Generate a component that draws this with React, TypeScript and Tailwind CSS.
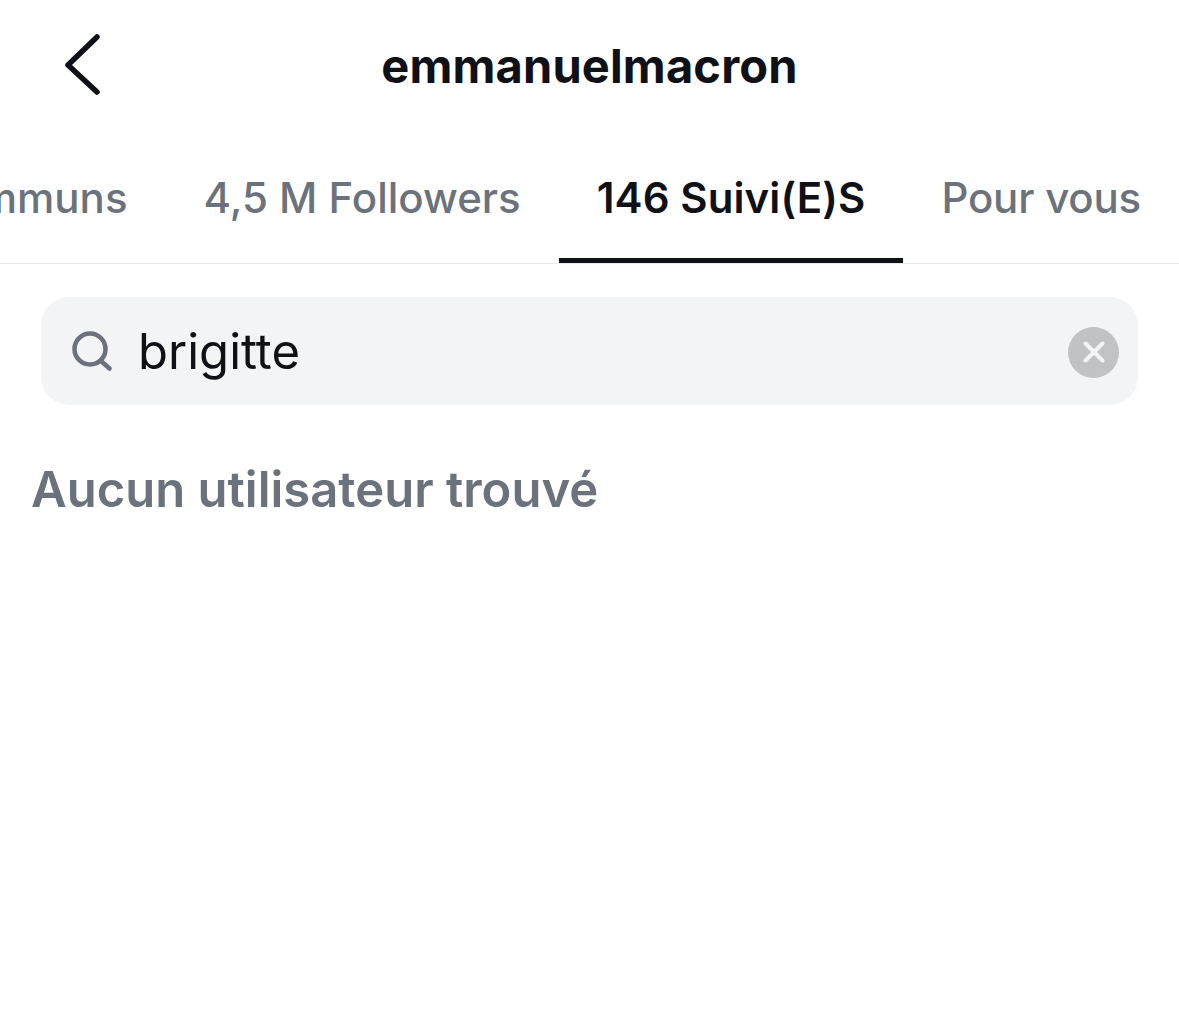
import React from "react";

const font = "font-['Inter','Liberation_Sans',sans-serif]";

function Tab({ label, active, className = "" }: { label: string; active?: boolean; className?: string }) {
  return (
    <div
      className={
        "shrink-0 h-full px-[38px] flex items-start pt-[42px] text-[42px] leading-[48px] whitespace-nowrap border-b-[5px] " +
        (active ? "font-semibold text-[#0f1117] border-[#0f1117] " : "font-medium text-[#6b727c] border-transparent ") +
        className
      }
    >
      {label}
    </div>
  );
}

export default function App() {
  return (
    <div className={"w-[1179px] h-[1029px] bg-white overflow-hidden " + font}>
      <header className="relative h-[132px] flex items-center justify-center">
        <svg className="absolute left-[60px] top-[30px]" width="46" height="70" viewBox="0 0 46 70" fill="none">
          <path d="M37 7 L8 35 L37 62" stroke="#0f1117" strokeWidth="5.5" strokeLinecap="round" strokeLinejoin="round" />
        </svg>
        <h1 className="text-[47px] leading-[56px] font-bold text-[#0f1117] tracking-[0.15px]">emmanuelmacron</h1>
      </header>

      <nav className="h-[132px] flex justify-end overflow-hidden border-b border-[#e9eaec]">
        <Tab label="Communs" />
        <Tab label="4,5 M Followers" />
        <Tab label="146 Suivi(E)S" active className="tracking-[0.1px]" />
        <Tab label="Pour vous" className="tracking-[-0.2px]" />
      </nav>

      <div className="px-[41px] pt-[33px]">
        <div className="h-[108px] rounded-[28px] bg-[#f3f4f6] flex items-center pl-[31px] pr-[19px]">
          <svg width="41" height="40" viewBox="0 0 41 40" fill="none" className="shrink-0">
            <circle cx="18" cy="18" r="15.5" stroke="#6b727c" strokeWidth="4.5" />
            <path d="M29 30 L37.5 37.5" stroke="#6b727c" strokeWidth="4.5" strokeLinecap="round" />
          </svg>
          <span className="ml-[25px] pt-[2px] text-[49px] leading-[58px] text-[#0f1117] font-normal">brigitte</span>
          <div className="ml-auto mt-[2px] w-[51px] h-[51px] rounded-full bg-[#c1c2c4] flex items-center justify-center">
            <svg width="24" height="24" viewBox="0 0 24 24" fill="none">
              <path d="M3.5 3.5 L20.5 20.5 M20.5 3.5 L3.5 20.5" stroke="#f3f4f6" strokeWidth="4" strokeLinecap="round" />
            </svg>
          </div>
        </div>
      </div>

      <p className="ml-[31px] mt-[56px] text-[49px] leading-[58px] font-semibold text-[#6b727c]">Aucun utilisateur trouvé</p>
    </div>
  );
}
